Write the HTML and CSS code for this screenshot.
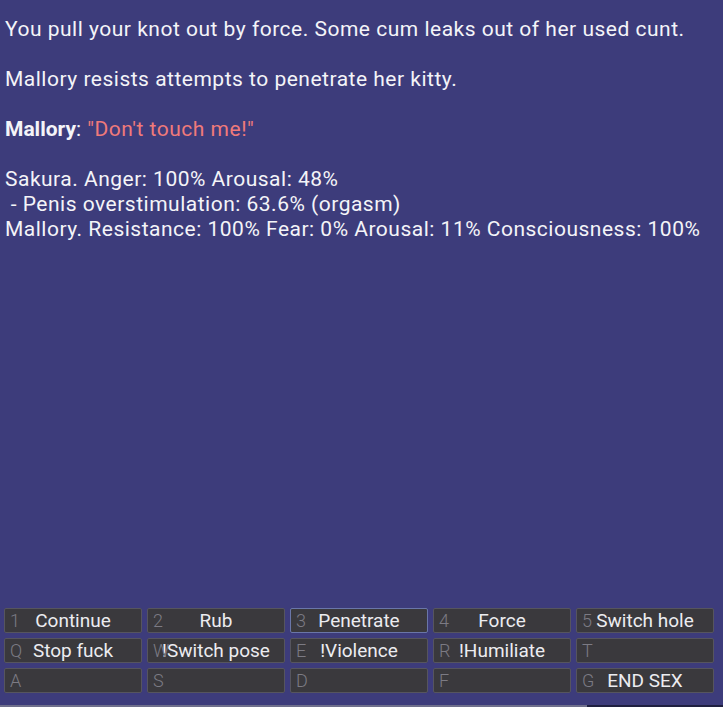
FILE: index.html
```html
<!DOCTYPE html>
<html>
<head>
<meta charset="utf-8">
<link rel="stylesheet" href="styles.css">
</head>
<body>
<div class="screen">
  <div class="log">
    <p>You pull your knot out by force. Some cum leaks out of her used cunt.</p>
    <p>Mallory resists attempts to penetrate her kitty.</p>
    <p><b>Mallory</b>: <span class="speech">"Don't touch me!"</span></p>
    <p>Sakura. Anger: 100% Arousal: 48%<br>&nbsp;- Penis overstimulation: 63.6% (orgasm)<br>Mallory. Resistance: 100% Fear: 0% Arousal: 11% Consciousness: 100%</p>
  </div>
  <div class="actions">
    <div class="btn"><span class="key">1</span><span class="label">Continue</span></div>
    <div class="btn"><span class="key">2</span><span class="label">Rub</span></div>
    <div class="btn focus"><span class="key">3</span><span class="label">Penetrate</span></div>
    <div class="btn"><span class="key">4</span><span class="label">Force</span></div>
    <div class="btn"><span class="key">5</span><span class="label">Switch hole</span></div>
    <div class="btn"><span class="key">Q</span><span class="label">Stop fuck</span></div>
    <div class="btn"><span class="key">W</span><span class="label">!Switch pose</span></div>
    <div class="btn"><span class="key">E</span><span class="label">!Violence</span></div>
    <div class="btn"><span class="key">R</span><span class="label">!Humiliate</span></div>
    <div class="btn"><span class="key">T</span><span class="label"></span></div>
    <div class="btn"><span class="key">A</span><span class="label"></span></div>
    <div class="btn"><span class="key">S</span><span class="label"></span></div>
    <div class="btn"><span class="key">D</span><span class="label"></span></div>
    <div class="btn"><span class="key">F</span><span class="label"></span></div>
    <div class="btn"><span class="key">G</span><span class="label">END SEX</span></div>
  </div>
  <div class="progress"><div class="fill" style="width:587px"></div></div>
</div>
</body>
</html>
```
FILE: styles.css
```css
html, body {
  margin: 0;
  padding: 0;
  background: #3d3c7b;
}
.screen {
  width: 723px;
  height: 707px;
  display: flex;
  flex-direction: column;
  background: #3d3c7b;
  font-family: Roboto, "Noto Sans", sans-serif;
  color: #f4f4f8;
}
.log {
  flex: 1;
  padding: 17px 0 0 5px;
  font-size: 21px;
  line-height: 25px;
  letter-spacing: 0.5px;
}
.log p {
  margin: 0 0 25px 0;
}
.log b {
  font-weight: 700;
  letter-spacing: 0;
}
.speech {
  color: #f07a7a;
}
.actions {
  display: grid;
  grid-template-columns: repeat(5, 138px);
  grid-auto-rows: 25px;
  gap: 5px;
  padding: 0 0 12px 4px;
}
.btn {
  position: relative;
  box-sizing: border-box;
  border: 1px solid #56555e;
  background: #3a393d;
  border-radius: 2px;
  display: flex;
  align-items: center;
  justify-content: center;
  font-size: 19px;
}
.btn.focus {
  border-color: #6a76a8;
}
.key {
  position: absolute;
  left: 5px;
  top: 1px;
  color: #7c7b84;
  font-size: 18px;
  line-height: 22px;
  font-weight: 300;
}
.label {
  color: #ececf0;
  line-height: 22px;
}
.progress {
  height: 2px;
  background: #1f2040;
}
.fill {
  height: 2px;
  background: #6f6f8c;
}
```
